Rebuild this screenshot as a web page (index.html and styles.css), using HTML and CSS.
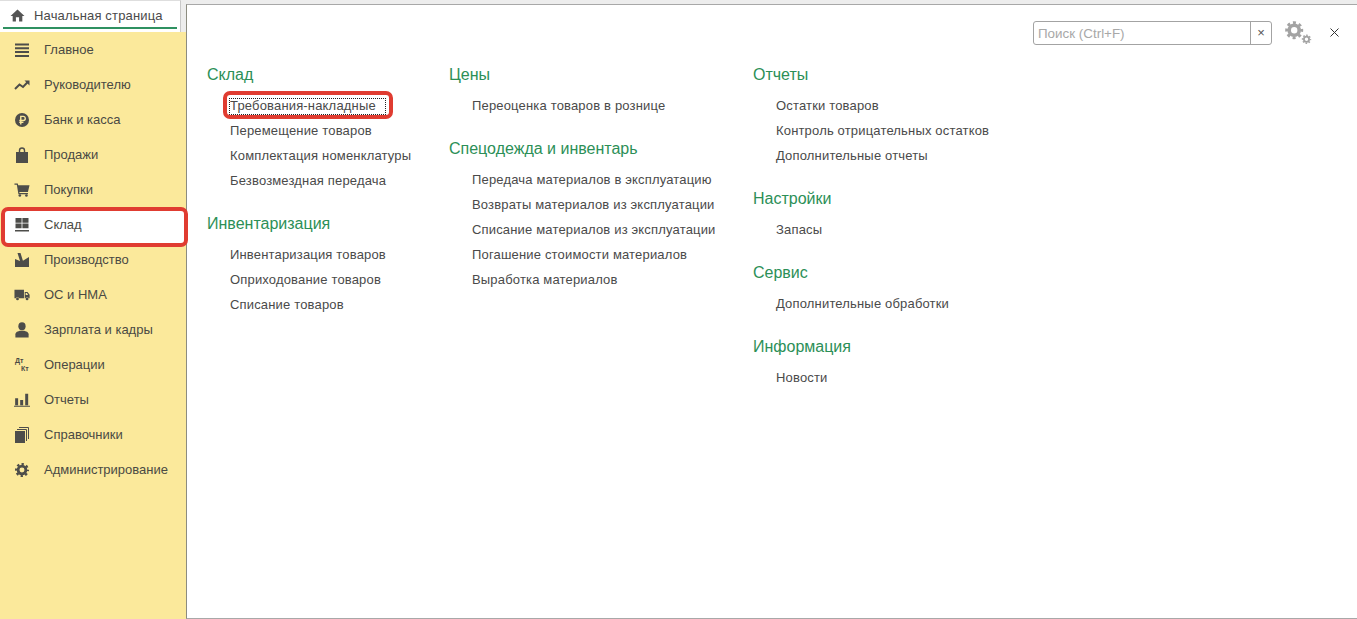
FILE: index.html
```html
<!DOCTYPE html>
<html lang="ru">
<head>
<meta charset="utf-8">
<title>Начальная страница</title>
<link rel="stylesheet" href="styles.css">
</head>
<body>
<div class="app">
  <aside class="left">
    <div class="tabbar">
      <div class="tab">
        <svg class="home" viewBox="0 0 16 14"><path d="M8 0.5 L0.5 7.5 H2.8 V13.5 H6.3 V9 H9.7 V13.5 H13.2 V7.5 H15.5 Z"/></svg>
        <span>Начальная страница</span>
      </div>
    </div>
    <nav class="side">
      <div class="item"><svg class="sm" viewBox="0 0 14 14"><path d="M0 0.5h14v2H0zM0 4.3h14v2H0zM0 8.1h14v2H0zM0 11.9h14v2H0z"/></svg><span>Главное</span></div>
      <div class="item"><svg viewBox="0 0 16 14"><path class="ln" d="M1 11 L5.5 6.5 L9 9 L14 3.8"/><path d="M10.5 2.5 H15.5 V7.5 Z"/></svg><span>Руководителю</span></div>
      <div class="item"><svg class="sm" viewBox="0 0 16 16"><circle cx="8" cy="8" r="8"/><path class="ln-y" d="M6.6 13 V3.9 H9.4 a2.3 2.3 0 0 1 0 4.7 H4.9 M4.9 10.7 H9.6"/></svg><span>Банк и касса</span></div>
      <div class="item"><svg viewBox="0 0 14 16"><path d="M1 5 H3.8 V3.5 a3.2 3.2 0 0 1 6.4 0 V5 H13 V16 H1 Z M5.2 5 H8.8 V3.5 a1.8 1.8 0 0 0 -3.6 0 Z" fill-rule="evenodd"/></svg><span>Продажи</span></div>
      <div class="item"><svg viewBox="0 0 17 15"><path d="M0.5 0.5 H4 L4.5 2.5 H16.5 L14.8 9.5 H5.6 L5.9 10.8 H14.8 V12 H4.7 L3 1.8 H0.5 Z"/><circle cx="6.2" cy="13.4" r="1.4"/><circle cx="13.2" cy="13.4" r="1.4"/></svg><span>Покупки</span></div>
      <div class="item active"><svg class="sm" viewBox="0 0 14 14"><path d="M0.5 0h6.1v4.7H0.5zM7.4 0h6.1v4.7H7.4zM0.5 5.5h6.1v4.7H0.5zM7.4 5.5h6.1v4.7H7.4zM0 12h14v1.6H0z"/></svg><span>Склад</span></div>
      <div class="item"><svg class="sm" viewBox="0 0 14 14"><path d="M2.5 0 H5.5 L8 8 H5 Z"/><path d="M0 14 V6 L5 8 H7.5 L14 4 V14 Z"/></svg><span>Производство</span></div>
      <div class="item"><svg viewBox="0 0 17 12"><path d="M0.5 0.5 H10.6 V9.4 H5.6 a2.2 2.2 0 0 0 -3.8 0 H0.5 Z"/><path fill-rule="evenodd" d="M11.4 2.8 H14.4 L16.6 5.8 V9.4 H15.8 a2.2 2.2 0 0 0 -3.8 0 H11.4 Z M12.4 3.8 V6 H15 L13.7 3.8 Z"/><circle cx="3.7" cy="10.2" r="1.5"/><circle cx="13.9" cy="10.2" r="1.5"/></svg><span>ОС и НМА</span></div>
      <div class="item"><svg viewBox="0 0 14 15"><ellipse cx="7" cy="4" rx="3.4" ry="3.8"/><path d="M0.8 14.5 V11.6 C0.8 9.6 3.5 8.7 5 8.3 H9 C10.5 8.7 13.2 9.6 13.2 11.6 V14.5 Z"/></svg><span>Зарплата и кадры</span></div>
      <div class="item"><span class="dtkt"><b>Дт</b><b class="kt">Кт</b></span><span>Операции</span></div>
      <div class="item"><svg viewBox="0 0 14 12"><path d="M1 4.5h2.6v6H1zM5.4 6h2.6v4.5H5.4zM9.8 0.5h2.6v10H9.8zM0 11h14v1H0z"/></svg><span>Отчеты</span></div>
      <div class="item"><svg viewBox="0 0 15 16"><path d="M0.5 4 H10.5 V16 H0.5 Z"/><path class="ln1" d="M2.5 2.5 H12 V14"/><path class="ln1" d="M4.5 0.5 H14 V12"/></svg><span>Справочники</span></div>
      <div class="item"><svg class="sm gear" viewBox="0 0 18 18"><circle class="ring" cx="9" cy="9" r="5"/><circle class="teeth" cx="9" cy="9" r="7.6"/></svg><span>Администрирование</span></div>
    </nav>
  </aside>
  <main class="panel">
    <div class="toolbar">
      <div class="search">
        <span class="ph">Поиск (Ctrl+F)</span>
        <span class="clear">×</span>
      </div>
      <svg class="gears" viewBox="0 0 27 24">
        <circle class="ring" cx="9.2" cy="9.2" r="5"/><circle class="teeth" cx="9.2" cy="9.2" r="7.6"/>
        <circle class="ring-s" cx="21.5" cy="18.3" r="2.6"/><circle class="teeth-s" cx="21.5" cy="18.3" r="4"/>
      </svg>
      <svg class="close" viewBox="0 0 9 9"><path d="M0.5 0.5 L8.5 8.5 M8.5 0.5 L0.5 8.5"/></svg>
    </div>
    <div class="cols">
      <div class="col c1">
        <section class="grp"><h2>Склад</h2><ul>
          <li class="focus"><a>Требования-накладные</a></li>
          <li>Перемещение товаров</li>
          <li>Комплектация номенклатуры</li>
          <li>Безвозмездная передача</li>
        </ul></section>
        <section class="grp"><h2>Инвентаризация</h2><ul>
          <li>Инвентаризация товаров</li>
          <li>Оприходование товаров</li>
          <li>Списание товаров</li>
        </ul></section>
      </div>
      <div class="col c2">
        <section class="grp"><h2>Цены</h2><ul>
          <li>Переоценка товаров в рознице</li>
        </ul></section>
        <section class="grp"><h2>Спецодежда и инвентарь</h2><ul>
          <li>Передача материалов в эксплуатацию</li>
          <li>Возвраты материалов из эксплуатации</li>
          <li>Списание материалов из эксплуатации</li>
          <li>Погашение стоимости материалов</li>
          <li>Выработка материалов</li>
        </ul></section>
      </div>
      <div class="col c3">
        <section class="grp"><h2>Отчеты</h2><ul>
          <li>Остатки товаров</li>
          <li>Контроль отрицательных остатков</li>
          <li>Дополнительные отчеты</li>
        </ul></section>
        <section class="grp"><h2>Настройки</h2><ul><li>Запасы</li></ul></section>
        <section class="grp"><h2>Сервис</h2><ul><li>Дополнительные обработки</li></ul></section>
        <section class="grp"><h2>Информация</h2><ul><li>Новости</li></ul></section>
      </div>
    </div>
  </main>
</div>
</body>
</html>
```
FILE: styles.css
```css
* { box-sizing: border-box; }
html, body { margin: 0; height: 100%; background: #fff; overflow: hidden; }
body { font-family: "Liberation Sans", Arial, sans-serif; font-size: 13px; color: #4a4a4a; }
.app { display: flex; width: 1357px; height: 619px; background: #ededed; }
.left { width: 186px; flex: none; display: flex; flex-direction: column; }
.tabbar { width: 181px; height: 32px; flex: none; background: #fff; border-top: 1px solid #dedede; border-right: 1px solid #c8c8c8; padding: 0 3px; }
.tab { width: 174px; height: 28px; display: flex; align-items: center; padding: 3px 0 0 7px; gap: 9px; border-bottom: 2px solid #2f9161; font-size: 13px; letter-spacing: 0.16px; white-space: nowrap; }
.home { width: 15px; height: 13px; fill: #555; flex: none; }
.side { flex: 1; background: #fbe99b; }
.item { position: relative; height: 35px; display: flex; align-items: center; padding-left: 14px; white-space: nowrap; color: #4a4a44; }
.item > svg { width: 16px; height: 16px; fill: #4d4d4a; flex: none; }
.item > svg.sm { width: 14px; height: 14px; margin: 0 1px; }
.item > span:last-child { margin-left: 14px; }
.ln { fill: none; stroke: #4d4d4a; stroke-width: 2; }
.ln1 { fill: none; stroke: #4d4d4a; stroke-width: 1; }
.ln-y { fill: none; stroke: #fbe99b; stroke-width: 1.6; }
.gear .ring { fill: none; stroke: #4d4d4a; stroke-width: 3.6; }
.gear .teeth { fill: none; stroke: #4d4d4a; stroke-width: 2.8; stroke-dasharray: 3 2.97; stroke-dashoffset: 1.5; }
.dtkt { width: 16px; height: 16px; flex: none; position: relative; font-size: 7px; line-height: 7px; }
.dtkt b { position: absolute; left: 1px; top: 0; }
.dtkt .kt { left: 7px; top: 8px; }
.item.active { isolation: isolate; }
.item.active::before { content: ""; position: absolute; z-index: -1; left: 1px; right: -2px; top: 0; bottom: -5px; background: #fff; border: 4px solid #e03c31; border-radius: 7px; }
.panel { flex: 1; margin-top: 4px; border-top: 1px solid #a8a8a8; border-bottom: 1px solid #a8a8a8; border-left: 1px solid #8c8c80; background: #fff; min-width: 0; }
.toolbar { height: 24px; margin-top: 16px; display: flex; align-items: center; padding-left: 846px; }
.search { width: 239px; height: 24px; border: 1px solid #a3a3a3; border-radius: 3px; display: flex; align-items: center; }
.ph { flex: 1; padding-left: 4px; color: #a8a8a8; font-size: 13.4px; }
.clear { width: 21px; height: 22px; border-left: 1px solid #a3a3a3; text-align: center; line-height: 22px; font-size: 13px; color: #555; }
.gears { width: 27px; height: 24px; margin-left: 13px; flex: none; fill: none; stroke: #a3a3a3; }
.gears .ring { stroke-width: 3.6; }
.gears .teeth { stroke-width: 2.8; stroke-dasharray: 3 2.97; stroke-dashoffset: 1.5; }
.gears .ring-s { stroke-width: 1.8; }
.gears .teeth-s { stroke-width: 1.4; stroke-dasharray: 1.6 1.54; stroke-dashoffset: 0.8; }
.close { width: 9px; height: 9px; margin: 0 0 1px 18px; fill: none; stroke: #333; stroke-width: 1; flex: none; }
.cols { display: flex; align-items: flex-start; padding-left: 20px; margin-top: 20px; }
.col { flex: none; }
.c1 { width: 242px; }
.c2 { width: 304px; }
h2 { margin: 0; font-size: 16px; font-weight: 400; line-height: 20px; color: #2c8f57; white-space: nowrap; }
ul { list-style: none; margin: 8px 0 0; padding: 0 0 0 23px; }
li { height: 25px; line-height: 25px; white-space: nowrap; letter-spacing: 0.17px; color: #4a4a4a; }
.grp + .grp { margin-top: 21px; }
.focus { position: relative; }
.focus a { display: inline-block; height: 15px; line-height: 14px; outline: 1px dotted #222; padding-right: 9px; vertical-align: middle; }
.focus::after { content: ""; position: absolute; left: -7px; top: -2px; box-sizing: border-box; width: 170px; height: 28px; border: 4px solid #e03c31; border-radius: 7px; }
```
